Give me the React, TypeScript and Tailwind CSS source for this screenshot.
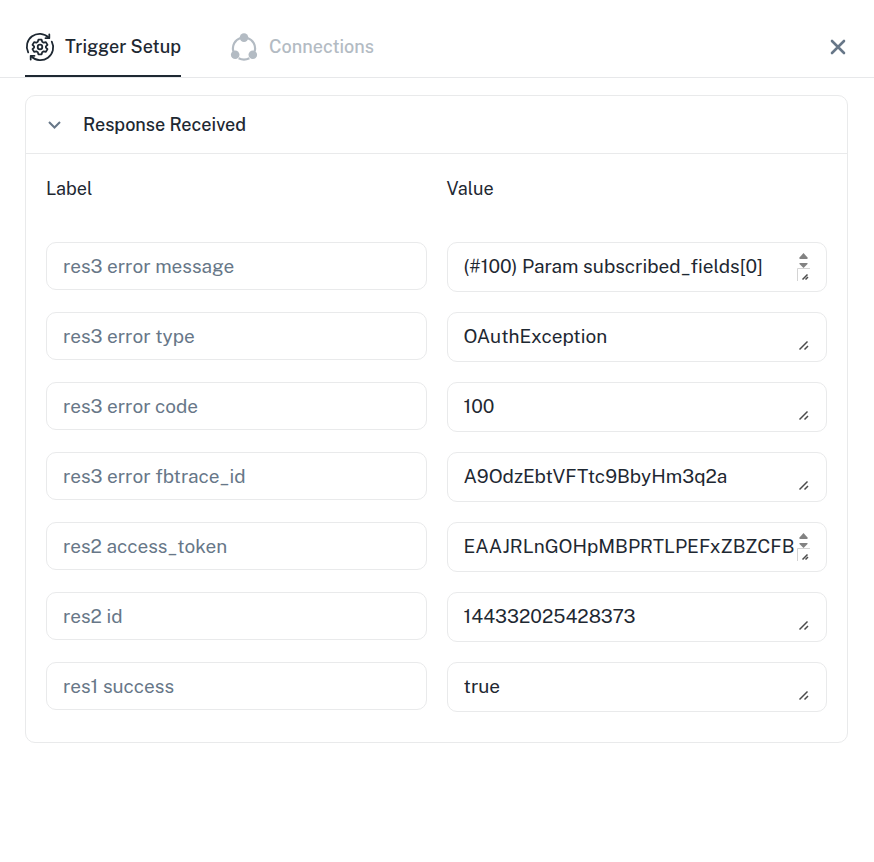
import { useState } from "react";

interface ResponseField {
  id: string;
  label: string;
  value: string;
  scrollable?: boolean;
}

const responseFields: ResponseField[] = [
  { id: "1", label: "res3 error message", value: "(#100) Param subscribed_fields[0]", scrollable: true },
  { id: "2", label: "res3 error type", value: "OAuthException" },
  { id: "3", label: "res3 error code", value: "100" },
  { id: "4", label: "res3 error fbtrace_id", value: "A9OdzEbtVFTtc9BbyHm3q2a" },
  { id: "5", label: "res2 access_token", value: "EAAJRLnGOHpMBPRTLPEFxZBZCFB", scrollable: true },
  { id: "6", label: "res2 id", value: "144332025428373" },
  { id: "7", label: "res1 success", value: "true" },
];

const TriggerIcon = () => (
  <svg width="30" height="30" viewBox="-1 -1 30 30" fill="none" stroke="currentColor" strokeWidth="1.8" strokeLinecap="round" strokeLinejoin="round" aria-hidden="true">
    <path d="M2.2 19.4A12.8 12.8 0 0 1 22.6 4.5" />
    <path d="M23.3 1.4v3.8h-3.8" />
    <path d="M25.8 8.6A12.8 12.8 0 0 1 5.4 23.5" />
    <path d="M4.7 26.6v-3.8h3.8" />
    <path d="M12.4 6.7h3.2l.6 2.1 1.5.9 2.2-.6 1.6 2.8-1.6 1.5v1.2l1.6 1.5-1.6 2.8-2.2-.6-1.5.9-.6 2.1h-3.2l-.6-2.1-1.5-.9-2.2.6-1.6-2.8 1.6-1.5v-1.2l-1.6-1.5 1.6-2.8 2.2.6 1.5-.9z" />
    <circle cx="14" cy="14" r="2.3" />
  </svg>
);

const ConnectionsIcon = () => (
  <svg width="30" height="30" viewBox="-1 -1 30 30" fill="none" aria-hidden="true">
    <path d="M10.6 5A10.8 10.8 0 0 0 3.4 18.5M17.4 5a10.8 10.8 0 0 1 7.2 13.5M8.6 25.2a12 12 0 0 0 10.8 0" stroke="currentColor" strokeWidth="2.2" />
    <circle cx="14" cy="4.6" r="4.3" fill="currentColor" />
    <circle cx="5.2" cy="21.8" r="4.3" fill="currentColor" />
    <circle cx="22.8" cy="21.8" r="4.3" fill="currentColor" />
  </svg>
);

const ScrollGrip = () => (
  <svg width="13" height="30" viewBox="0 0 13 30" aria-hidden="true">
    <path d="M6.5 1 10.5 5.5V7h-8V5.5z" fill="#828282" />
    <path d="M6.5 16 10.5 12V11h-8v1z" fill="#828282" />
    <path d="M.5 29V16.5H13" stroke="#d4d4d4" fill="none" />
    <path d="m5.5 27.5 5-5M8.5 27.5l2.5-2.5" stroke="#4b4b4b" strokeWidth="1.5" />
  </svg>
);

const ResizeGrip = () => (
  <svg width="13" height="30" viewBox="0 0 13 30" aria-hidden="true">
    <path d="m2.5 27.5 8-8M7.5 27.5l3.5-3.5" stroke="#4b4b4b" strokeWidth="1.5" />
  </svg>
);

const FieldRow = ({ id, label, value, scrollable = false }: ResponseField) => (
  <div className="grid grid-cols-2 items-start gap-5">
    <input
      id={`label-${id}`}
      aria-label={`Label ${id}`}
      defaultValue={label}
      readOnly
      className="h-12 w-full rounded-[10px] border border-[#e9eaeb] px-4 text-[19px] text-[#677788] outline-none"
    />
    <div className="relative h-[50px] rounded-[10px] border border-[#e9eaeb] px-4 py-[9px]">
      <textarea
        aria-label={label}
        defaultValue={value}
        rows={1}
        className="block h-[30px] w-full resize-none overflow-hidden whitespace-nowrap text-[19px] leading-7 text-[#1e2832] outline-none"
      />
      <span className="pointer-events-none absolute top-[9px] right-4">
        {scrollable ? <ScrollGrip /> : <ResizeGrip />}
      </span>
    </div>
  </div>
);

export default function App() {
  const [open, setOpen] = useState(true);

  return (
    <main className="min-h-screen bg-white font-['Public_Sans','Inter','Liberation_Sans',sans-serif] text-[#1e2832]">
      <header className="flex items-center justify-between border-b border-[#e7e8ea] pr-[26px] pl-[25px]">
        <nav className="flex gap-12" role="tablist">
          <button type="button" role="tab" aria-selected="true" className="flex h-[77px] items-center gap-[10px] border-b-2 border-[#1e2832] pt-[18px] text-lg font-medium">
            <TriggerIcon />
            Trigger Setup
          </button>
          <button type="button" role="tab" aria-selected="false" className="flex h-[77px] items-center gap-[10px] border-b-2 border-transparent pt-[18px] text-lg font-medium text-[#b3bbc3]">
            <ConnectionsIcon />
            Connections
          </button>
        </nav>
        <button type="button" aria-label="Close" className="mt-4 text-[#677788]">
          <svg width="20" height="20" viewBox="0 0 20 20" fill="none" stroke="currentColor" strokeWidth="2.6" strokeLinecap="round" aria-hidden="true">
            <path d="m4 4 12 12M16 4 4 16" />
          </svg>
        </button>
      </header>

      <section className="mr-[26px] ml-[25px] mt-[17px] rounded-[10px] border border-[#e9eaeb]">
        <button
          type="button"
          aria-expanded={open}
          onClick={() => setOpen(!open)}
          className="flex h-[58px] w-full items-center gap-[22px] border-b border-[#e9eaeb] px-[22px] text-lg font-medium"
        >
          <svg width="13" height="8" viewBox="0 0 13 8" fill="none" stroke="#677788" strokeWidth="2" aria-hidden="true">
            <path d="m1 1 5.5 5.5L12 1" />
          </svg>
          Response Received
        </button>

        {open && (
          <div className="px-5 pt-[23px] pb-[30px]">
            <div className="mb-[41px] grid grid-cols-2 gap-5 text-lg leading-6">
              <span>Label</span>
              <span>Value</span>
            </div>
            <div className="flex flex-col gap-5">
              {responseFields.map((field) => (
                <FieldRow key={field.id} {...field} />
              ))}
            </div>
          </div>
        )}
      </section>
    </main>
  );
}
